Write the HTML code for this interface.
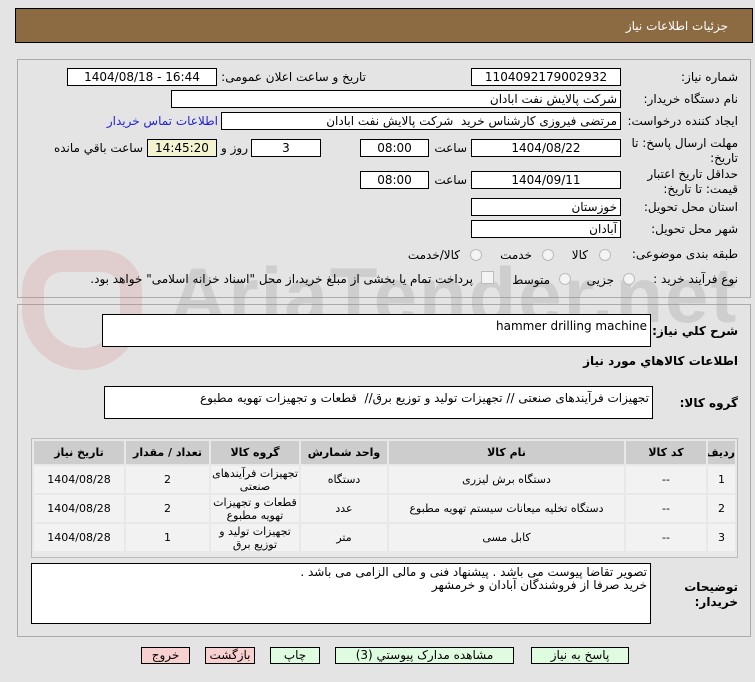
<!DOCTYPE html>
<html><head><meta charset="utf-8"><style>
body{margin:0;width:755px;height:682px;background:#e4e4e4;font-family:"DejaVu Sans","Liberation Sans",sans-serif;font-size:12px;color:#000;position:relative;overflow:hidden}
.a{position:absolute}
.b{position:absolute;background:#fff;border:1px solid #000;box-sizing:border-box;direction:rtl;padding:0 3px;line-height:16px;white-space:nowrap;overflow:hidden}
.c{text-align:center;direction:ltr;padding:0}
.l{position:absolute;direction:rtl;white-space:nowrap;text-align:right}
.r{position:absolute;width:12px;height:12px;border:1px solid #bbb;border-radius:50%;background:#f4f4f4;box-sizing:border-box}
table{border-collapse:separate;border-spacing:2px;table-layout:fixed}
td,th{text-align:center;font-size:11px;padding:0;overflow:hidden}
th{background:#cdcdcd;height:23px}
td{background:#f2f2f2;height:27px;line-height:13px}
.btn{position:absolute;top:647px;height:17px;border:1px solid #000;box-sizing:border-box;text-align:center;line-height:15px;font-size:12px}
</style></head><body>
<div class="a" style="left:15px;top:8px;width:738px;height:35px;background:#8c6b42;border:1px solid #000;box-sizing:border-box"></div>
<div class="l" style="right:27px;top:19px;color:#fff;font-size:12px">جزئیات اطلاعات نیاز</div>
<div class="a" style="left:17px;top:59px;width:734px;height:239px;border:1px solid #aaa;box-sizing:border-box"></div>
<div class="a" style="left:17px;top:304px;width:734px;height:333px;border:1px solid #aaa;box-sizing:border-box"></div>
<!-- watermark -->
<div class="a" style="left:22px;top:250px;width:120px;height:120px;border:22px solid rgba(210,120,120,0.2);border-radius:40px 40px 60px 60px;box-sizing:border-box"></div>
<div class="a" style="left:170px;top:250px;font-size:78px;font-weight:bold;color:rgba(150,150,150,0.28);font-family:'Liberation Sans',sans-serif;letter-spacing:2px">AriaTender.net</div>

<div class="l" style="right:17px;top:70px">شماره نیاز:</div>
<div class="b c" style="left:471px;top:68px;width:150px;height:18px">1104092179002932</div>
<div class="l" style="right:389px;top:70px">تاریخ و ساعت اعلان عمومی:</div>
<div class="b c" style="left:67px;top:68px;width:150px;height:18px">1404/08/18 - 16:44</div>

<div class="l" style="right:17px;top:92px">نام دستگاه خریدار:</div>
<div class="b" style="left:171px;top:90px;width:450px;height:18px">شرکت پالایش نفت ابادان</div>

<div class="l" style="right:17px;top:114px">ایجاد کننده درخواست:</div>
<div class="b" style="left:221px;top:112px;width:400px;height:18px">مرتضی فیروزی کارشناس خرید &nbsp;شرکت پالایش نفت ابادان</div>
<div class="l" style="right:537px;top:114px;color:#2323d0">اطلاعات تماس خریدار</div>

<div class="l" style="right:17px;top:136px;line-height:15px">مهلت ارسال پاسخ: تا<br>تاریخ:</div>
<div class="b c" style="left:471px;top:139px;width:150px;height:18px">1404/08/22</div>
<div class="l" style="right:288px;top:141px">ساعت</div>
<div class="b c" style="left:360px;top:139px;width:69px;height:18px">08:00</div>
<div class="b c" style="left:251px;top:139px;width:70px;height:18px">3</div>
<div class="l" style="right:507px;top:141px">روز و</div>
<div class="b c" style="left:147px;top:139px;width:70px;height:18px;background:#f3f3cf">14:45:20</div>
<div class="l" style="right:612px;top:141px">ساعت باقي مانده</div>

<div class="l" style="right:17px;top:167px;line-height:15px">حداقل تاریخ اعتبار<br>قیمت: تا تاریخ:</div>
<div class="b c" style="left:471px;top:171px;width:150px;height:18px">1404/09/11</div>
<div class="l" style="right:288px;top:173px">ساعت</div>
<div class="b c" style="left:360px;top:171px;width:69px;height:18px">08:00</div>

<div class="l" style="right:17px;top:200px">استان محل تحویل:</div>
<div class="b" style="left:471px;top:198px;width:150px;height:18px">خوزستان</div>
<div class="l" style="right:17px;top:222px">شهر محل تحویل:</div>
<div class="b" style="left:471px;top:220px;width:150px;height:18px">آبادان</div>

<div class="l" style="right:17px;top:247px">طبقه بندی موضوعی:</div>
<div class="r" style="left:599px;top:249px"></div><div class="l" style="right:167px;top:248px">کالا</div>
<div class="r" style="left:542px;top:249px"></div><div class="l" style="right:223px;top:248px">خدمت</div>
<div class="r" style="left:470px;top:249px"></div><div class="l" style="right:295px;top:248px">کالا/خدمت</div>

<div class="l" style="right:17px;top:272px">نوع فرآیند خرید :</div>
<div class="r" style="left:623px;top:273px"></div><div class="l" style="right:141px;top:273px">جزیی</div>
<div class="r" style="left:559px;top:273px"></div><div class="l" style="right:205px;top:273px">متوسط</div>
<div class="a" style="left:481px;top:271px;width:11px;height:11px;border:1px solid #bbb;background:#f4f4f4"></div>
<div class="l" style="right:282px;top:272px">پرداخت تمام یا بخشی از مبلغ خرید،از محل "اسناد خزانه اسلامی" خواهد بود.</div>

<div class="l" style="right:17px;top:324px;font-weight:bold">شرح کلي نياز:</div>
<div class="b" style="left:102px;top:314px;width:549px;height:33px;direction:ltr;text-align:right;line-height:22px">hammer drilling machine</div>
<div class="l" style="right:17px;top:354px;font-weight:bold">اطلاعات کالاهاي مورد نياز</div>
<div class="l" style="right:17px;top:396px;font-weight:bold">گروه کالا:</div>
<div class="b" style="left:104px;top:386px;width:549px;height:33px;line-height:22px">تجهیزات فرآیندهای صنعتی // تجهیزات تولید و توزیع برق// &nbsp;قطعات و تجهیزات تهویه مطبوع</div>

<div class="a" style="left:31px;top:438px;width:707px;height:120px;border:1px solid #bbb;box-sizing:border-box;background:#e8e8e8;overflow:hidden">
<table style="width:705px;direction:rtl">
<tr><th style="width:27px">ردیف</th><th style="width:80px">کد کالا</th><th>نام کالا</th><th style="width:86px">واحد شمارش</th><th style="width:88px">گروه کالا</th><th style="width:83px">تعداد / مقدار</th><th style="width:90px">تاریخ نیاز</th></tr>
<tr><td>1</td><td>--</td><td>دستگاه برش لیزری</td><td>دستگاه</td><td>تجهیزات فرآیندهای صنعتی</td><td>2</td><td>1404/08/28</td></tr>
<tr><td>2</td><td>--</td><td>دستگاه تخلیه میعانات سیستم تهویه مطبوع</td><td>عدد</td><td>قطعات و تجهیزات تهویه مطبوع</td><td>2</td><td>1404/08/28</td></tr>
<tr><td>3</td><td>--</td><td>کابل مسی</td><td>متر</td><td>تجهیزات تولید و توزیع برق</td><td>1</td><td>1404/08/28</td></tr>
</table></div>

<div class="l" style="right:17px;top:580px;font-weight:bold;line-height:15px">توضیحات<br>خریدار:</div>
<div class="b" style="left:31px;top:563px;width:620px;height:61px;line-height:13px;padding-top:2px">تصویر تقاضا پیوست می باشد . پیشنهاد فنی و مالی الزامی می باشد .<br>خرید صرفا از فروشندگان آبادان و خرمشهر</div>

<div class="btn" style="left:141px;width:49px;background:#f8d0d0">خروج</div>
<div class="btn" style="left:205px;width:50px;background:#f8d0d0">بازگشت</div>
<div class="btn" style="left:270px;width:50px;background:#e0fce0">چاپ</div>
<div class="btn" style="left:335px;width:179px;background:#e0fce0">مشاهده مدارک پیوستي (3)</div>
<div class="btn" style="left:531px;width:98px;background:#e0fce0">پاسخ به نیاز</div>
</body></html>
